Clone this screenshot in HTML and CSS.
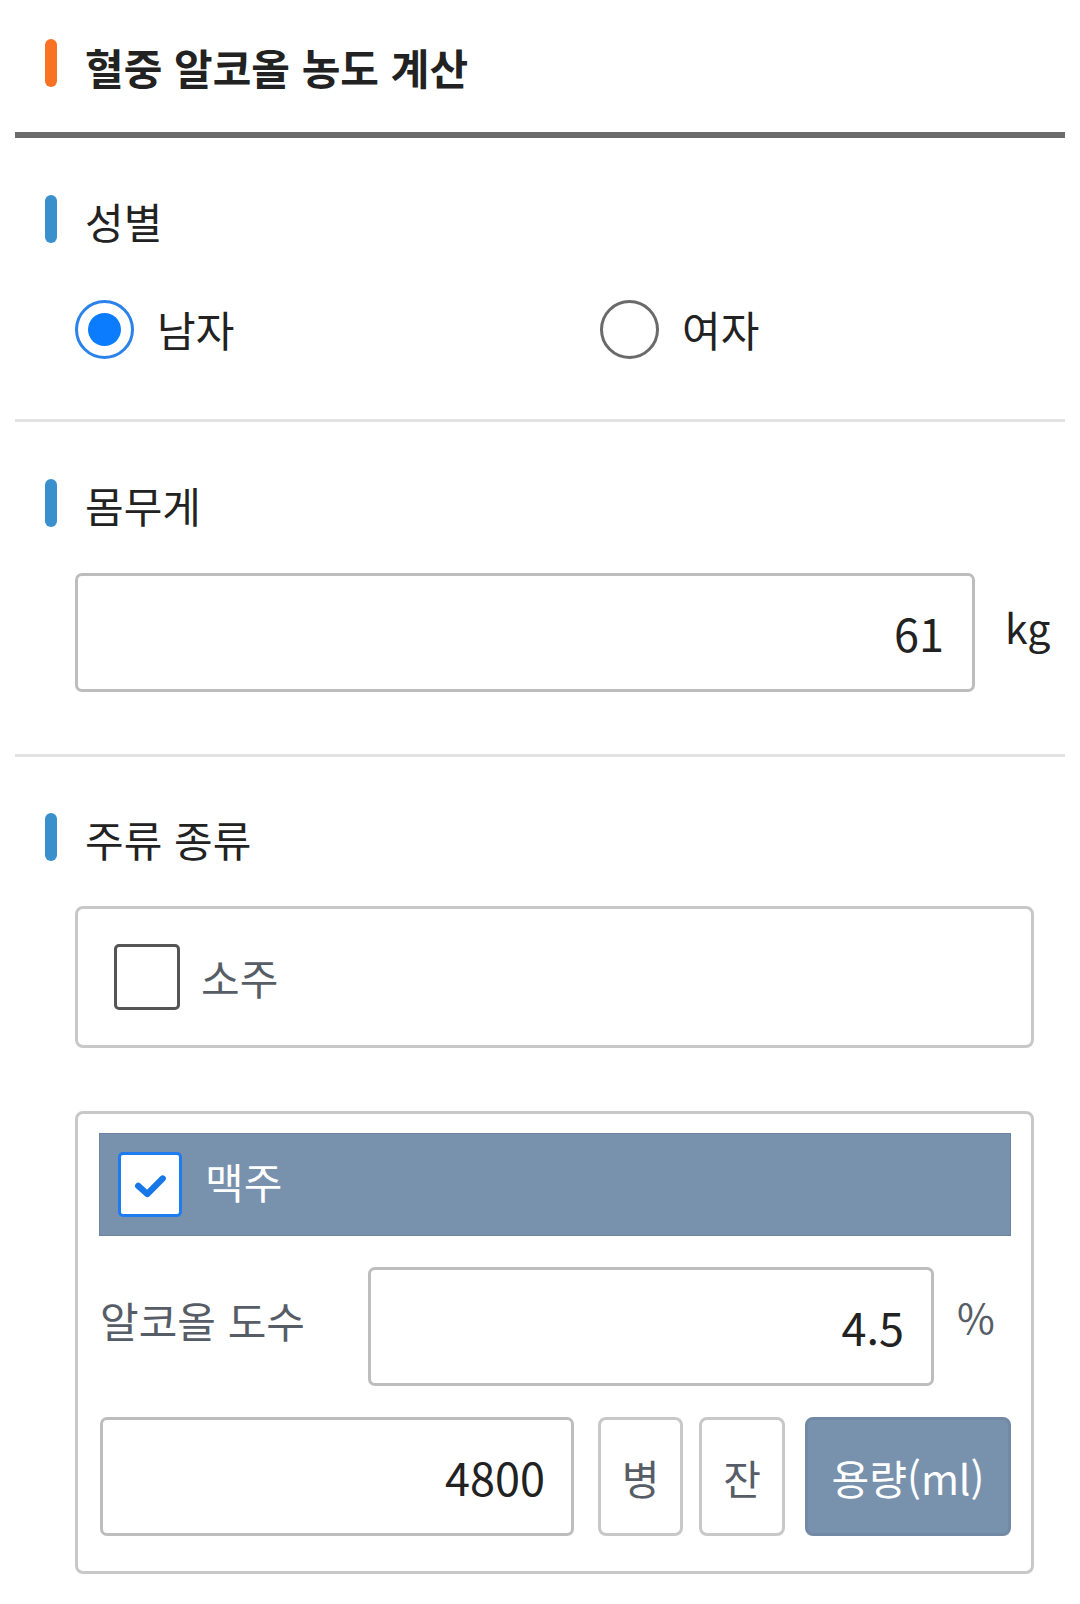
FILE: index.html
```html
<!DOCTYPE html>
<html lang="ko">
<head>
<meta charset="utf-8">
<title>혈중 알코올 농도 계산</title>
<link rel="stylesheet" href="styles.css">
</head>
<body>
<div class="page">
  <header class="header">
    <span class="bar bar-orange"></span>
    <h1 class="title">혈중 알코올 농도 계산</h1>
  </header>

  <section class="section sec-gender">
    <div class="sec-head"><span class="bar bar-blue"></span><h2 class="sec-title">성별</h2></div>
    <div class="radios">
      <label class="radio-opt"><span class="radio checked"></span><span class="opt-label">남자</span></label>
      <label class="radio-opt"><span class="radio"></span><span class="opt-label">여자</span></label>
    </div>
  </section>

  <section class="section sec-weight">
    <div class="sec-head"><span class="bar bar-blue"></span><h2 class="sec-title">몸무게</h2></div>
    <div class="weight-row">
      <input class="field weight-field" type="text" value="61">
      <span class="unit">kg</span>
    </div>
  </section>

  <section class="section sec-drinks">
    <div class="sec-head"><span class="bar bar-blue"></span><h2 class="sec-title">주류 종류</h2></div>

    <div class="drink-box soju">
      <span class="check"></span>
      <span class="drink-name">소주</span>
    </div>

    <div class="drink-box beer">
      <div class="beer-head">
        <span class="check checked">
          <svg viewBox="0 0 64 65" width="64" height="65"><polyline points="19,34 29,43 46,26" fill="none" stroke="#1677e8" stroke-width="7" stroke-linecap="round" stroke-linejoin="round"/></svg>
        </span>
        <span class="drink-name light">맥주</span>
      </div>
      <div class="abv-row">
        <span class="abv-label">알코올 도수</span>
        <input class="field abv-field" type="text" value="4.5">
        <span class="unit pct">%</span>
      </div>
      <div class="amount-row">
        <input class="field amount-field" type="text" value="4800">
        <button class="unit-btn btn-bottle" type="button">병</button>
        <button class="unit-btn btn-glass" type="button">잔</button>
        <button class="unit-btn btn-ml active" type="button">용량(ml)</button>
      </div>
    </div>
  </section>
</div>
</body>
</html>
```

FILE: styles.css
```css
* { box-sizing: border-box; }
html, body { margin: 0; padding: 0; background: #fff; }
body {
  font-family: "Noto Sans CJK KR", "Noto Sans", sans-serif;
  color: #222;
  width: 1080px;
}
.page { width: 1080px; }

.bar {
  display: block;
  width: 12px;
  height: 48px;
  border-radius: 6px;
  flex: none;
}
.bar-orange { background: #f97224; }
.bar-blue { background: #3a8fcd; }

.header {
  margin: 0 15px 0 15px;
  padding: 39px 0 45px 30px;
  border-bottom: 6px solid #6b6b6b;
  display: flex;
  align-items: flex-start;
}
.title {
  margin: 0 0 0 28px;
  font-size: 42px;
  font-weight: 700;
  line-height: 48px;
  padding-top: 4px;
  height: 48px;
  color: #222;
}

.section {
  margin: 0 15px 0 15px;
  border-bottom: 3px solid #e3e3e3;
  padding: 57px 0 60px 30px;
}
.sec-weight { padding-top: 57px; padding-bottom: 62px; }
.sec-drinks { border-bottom: none; padding-top: 56px; padding-bottom: 31px; }

.sec-head {
  display: flex;
  align-items: flex-start;
  height: 48px;
}
.sec-title {
  margin: 0 0 0 28px;
  font-size: 42px;
  font-weight: 400;
  line-height: 48px;
  padding-top: 2px;
  color: #222;
}

/* radios */
.radios {
  display: flex;
  margin: 56px 0 0 30px;
}
.radio-opt {
  display: flex;
  align-items: center;
  height: 60px;
}
.radio-opt:first-child { width: 525px; }
.radio {
  width: 59px;
  height: 59px;
  border-radius: 50%;
  border: 3px solid #6a6a6a;
  display: flex;
  align-items: center;
  justify-content: center;
  flex: none;
}
.radio.checked { border-color: #2a82ea; }
.radio.checked::after {
  content: "";
  width: 33px;
  height: 33px;
  border-radius: 50%;
  background: #0a7cfd;
}
.opt-label {
  font-size: 42px;
  margin-left: 23px;
  line-height: 60px;
  color: #222;
}

/* fields */
.field {
  font-family: "Noto Sans CJK KR", "Noto Sans", sans-serif;
  font-size: 45px;
  color: #222;
  text-align: right;
  border: 3px solid #bdbdbd;
  border-radius: 7px;
  background: #fff;
  height: 119px;
  padding: 0 28px 0 20px;
  outline: none;
  margin: 0;
}
.weight-row {
  display: flex;
  align-items: center;
  margin: 46px 0 0 30px;
}
.weight-field { width: 900px; }
.unit {
  font-size: 41px;
  color: #222;
  margin-left: 30px;
  margin-top: -14px;
}

/* drink boxes */
.drink-box {
  margin-left: 30px;
  width: 959px;
  border: 3px solid #c8c8c8;
  border-radius: 8px;
  background: #fff;
}
.soju {
  margin-top: 45px;
  height: 142px;
  display: flex;
  align-items: center;
  padding-left: 36px;
}
.check {
  width: 66px;
  height: 66px;
  border: 3px solid #555;
  border-radius: 5px;
  background: #fff;
  flex: none;
  display: flex;
  align-items: center;
  justify-content: center;
}
.check svg { display: block; }
.check.checked {
  width: 64px;
  height: 65px;
  border-color: #1f7cf0;
}
.drink-name {
  font-size: 42px;
  color: #575d66;
  margin-left: 21px;
  line-height: 60px;
}
.drink-name.light { color: #fff; margin-left: 23px; margin-top: -8px; }

.beer {
  margin-top: 63px;
  padding: 19px 20px 35px 21px;
}
.beer-head {
  height: 103px;
  background: #7891ad;
  border: 1px solid #6c84a0;
  display: flex;
  align-items: center;
  padding-left: 18px;
}
.abv-row {
  display: flex;
  align-items: center;
  margin-top: 31px;
  padding-left: 1px;
}
.abv-label {
  width: 268px;
  font-size: 42px;
  color: #575d66;
  margin-top: -14px;
}
.abv-field { width: 566px; padding-right: 27px; }
.pct {
  color: #575d66;
  margin-left: 23px;
  margin-top: -22px;
}
.amount-row {
  display: flex;
  margin-top: 31px;
  padding-left: 1px;
}
.amount-field { width: 474px; padding-right: 26px; }
.unit-btn {
  font-family: "Noto Sans CJK KR", "Noto Sans", sans-serif;
  font-size: 41px;
  color: #575d66;
  background: #fff;
  border: 3px solid #c8c8c8;
  border-radius: 8px;
  height: 119px;
  padding: 0;
  margin: 0;
}
.btn-bottle { width: 85px; margin-left: 24px; }
.btn-glass { width: 86px; margin-left: 16px; }
.btn-ml {
  width: 206px;
  margin-left: 20px;
}
.unit-btn.active {
  background: #7891ad;
  border-color: #7289a6;
  color: #fff;
}
```
